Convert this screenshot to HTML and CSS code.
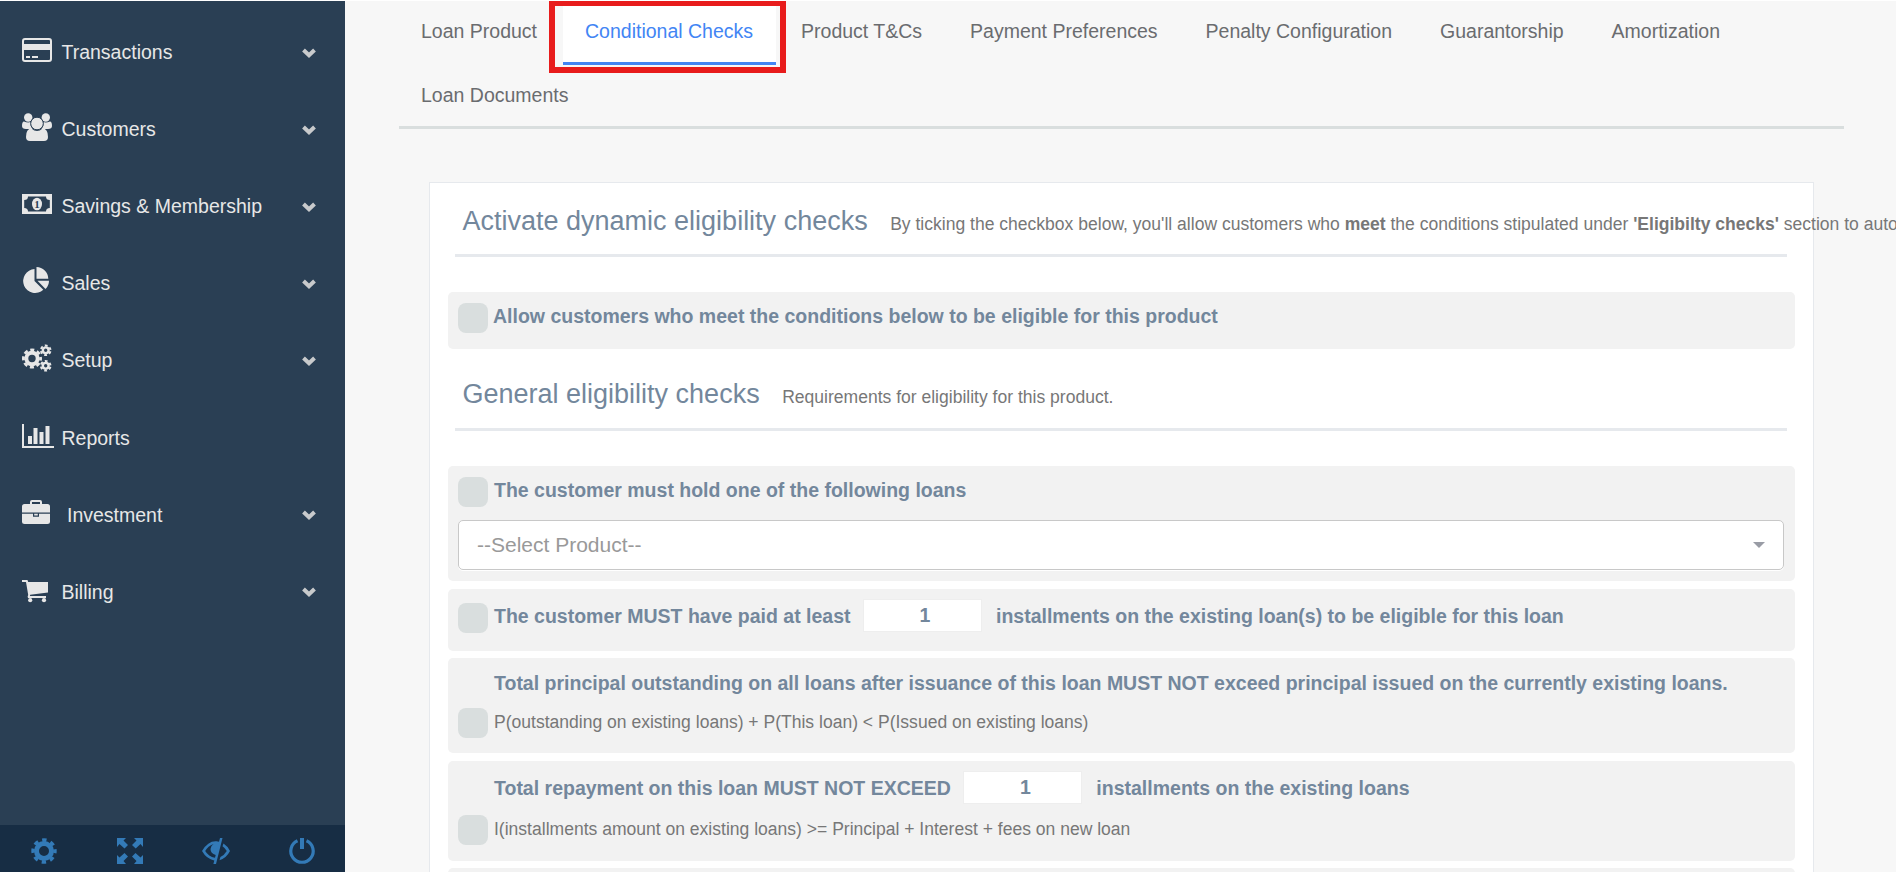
FILE: index.html
```html
<!DOCTYPE html>
<html lang="en">
<head>
  <meta charset="UTF-8">
  <title>Conditional Checks</title>
  <link rel="stylesheet" href="styles.css">
</head>
<body>

  <div class="wrapper">

    <div class="sidebar">
      <ul class="menu">
        <li>
          <svg class="icon" viewBox="0 0 34 30"><rect x="1" y="4" width="28" height="22" rx="2" fill="none" stroke="currentColor" stroke-width="2"/><path d="M1 9h28v6H1zM4 21h4v2H4zM10 21h6v2h-6z"/></svg>
          <span>Transactions</span>
          <svg class="arrow" viewBox="0 0 14 10"><path d="M1.5 2l5.500 5.200L12.500 2"/></svg>
        </li>
        <li>
          <svg class="icon" viewBox="0 0 34 30"><circle cx="6.200" cy="5.500" r="4.200"/><circle cx="23.800" cy="5.500" r="4.200"/><path d="M2 9.500Q6 11 8.500 10Q8 14 10.500 17H4Q0 17 0 14Q0 9.500 2 9.500zM28 9.500Q24 11 21.500 10Q22 14 19.500 17H26Q30 17 30 14Q30 9.500 28 9.500z"/><circle class="head" cx="15" cy="11.500" r="6.300"/><path d="M9.500 16.500Q15 21.500 20.500 16.500Q26 16.500 26 25Q26 29 22 29H8Q4 29 4 25Q4 16.500 9.500 16.500z"/></svg>
          <span>Customers</span>
          <svg class="arrow" viewBox="0 0 14 10"><path d="M1.5 2l5.500 5.200L12.500 2"/></svg>
        </li>
        <li>
          <svg class="icon" viewBox="0 0 34 30"><path fill-rule="evenodd" d="M0 5h30v20H0zM6 7.500Q6 11 2.200 11v8Q6 19 6 22.500H24Q24 19 27.800 19v-8Q24 11 24 7.500z"/><ellipse cx="15" cy="15" rx="5" ry="6.300"/><text class="note" x="15" y="19" text-anchor="middle">1</text></svg>
          <span>Savings &amp; Membership</span>
          <svg class="arrow" viewBox="0 0 14 10"><path d="M1.5 2l5.500 5.200L12.500 2"/></svg>
        </li>
        <li>
          <svg class="icon" viewBox="0 0 34 30"><path d="M12.500 3v12l8.800 8.800A12 12 0 1 1 12.500 3zM14.500 1A12 12 0 0 1 26.300 12.700H14.500zM15.500 14.800H27Q27 19.500 23.500 23z"/></svg>
          <span>Sales</span>
          <svg class="arrow" viewBox="0 0 14 10"><path d="M1.5 2l5.500 5.200L12.500 2"/></svg>
        </li>
        <li>
          <svg class="icon" viewBox="0 0 34 30"><g fill="none" stroke="currentColor"><circle cx="10" cy="15.500" r="5.700" stroke-width="4"/><circle cx="10" cy="15.500" r="8.600" stroke-width="2.800" stroke-dasharray="4 2.754" stroke-dashoffset="2"/><circle cx="23.700" cy="7.300" r="2.900" stroke-width="2.400"/><circle cx="23.700" cy="7.300" r="4.800" stroke-width="2" stroke-dasharray="2.800 2.227" stroke-dashoffset="4"/><circle cx="23.700" cy="22.800" r="2.900" stroke-width="2.400"/><circle cx="23.700" cy="22.800" r="4.800" stroke-width="2" stroke-dasharray="2.800 2.227" stroke-dashoffset="4"/></g></svg>
          <span>Setup</span>
          <svg class="arrow" viewBox="0 0 14 10"><path d="M1.5 2l5.500 5.200L12.500 2"/></svg>
        </li>
        <li>
          <svg class="icon" viewBox="0 0 34 30"><path d="M0 3h2v22h30v2H0zM6 15h4v8H6zM11.500 7h4v16h-4zM17.500 11h4v12h-4zM23.500 5h4v18h-4z"/></svg>
          <span>Reports</span>
        </li>
        <li>
          <svg class="icon" viewBox="0 0 34 30"><path fill-rule="evenodd" d="M8 6V4Q8 2 10 2h8Q20 2 20 4v2h5.500Q28 6 28 8.500V14.500H0V8.500Q0 6 2.500 6zM10 6h8V4h-8zM0 15.700h11v3h6v-3h11V24Q28 26 25.500 26h-23Q0 26 0 24zM12.200 15.700h3.600v1.800h-3.600z"/></svg>
          <span class="indent">Investment</span>
          <svg class="arrow" viewBox="0 0 14 10"><path d="M1.5 2l5.500 5.200L12.500 2"/></svg>
        </li>
        <li>
          <svg class="icon" viewBox="0 0 34 30"><path d="M0 5h5.500l.7 2H26v10.500L8.200 19.700l-.3 1.300H24v2H6q-.8-1.500.2-3L4 7H0z"/><circle cx="8.200" cy="25.200" r="2.100"/><circle cx="22" cy="25.200" r="2.100"/></svg>
          <span>Billing</span>
          <svg class="arrow" viewBox="0 0 14 10"><path d="M1.5 2l5.500 5.200L12.500 2"/></svg>
        </li>
      </ul>

      <div class="sidebar-footer">
        <a><svg viewBox="0 0 28 28"><g fill="none" stroke="currentColor"><circle cx="14" cy="14" r="7.500" stroke-width="5"/><circle cx="14" cy="14" r="11" stroke-width="3.400" stroke-dasharray="4.400 4.239" stroke-dashoffset="2.200"/></g></svg></a>
        <a><svg viewBox="0 0 28 28"><path d="M1 1h9L7.500 3.500 12 8l-3.500 3.500L3.500 7 1 10zM27 1v9l-2.500-3-4.800 4.500L16 8l4.500-4.500L18 1zM1 27v-9l2.500 2.500 5-4.500L12 19.500 7.500 24l2.500 3zM27 27h-9l2.500-3-4.500-4.500 3.500-3.500 5 4.500L27 18z"/></svg></a>
        <a><svg viewBox="0 0 28 28"><path fill-rule="evenodd" d="M18 1h2.500L14 27h-2.600l.9-3.500Q4.500 22 0 14 6 4 14 4.300q1.500-.1 3 .4zM11.500 7Q6 9 3.200 14q3.300 5.500 9.800 6.800l.7-2.700Q8.500 16.500 8.500 12q0-3 3-5z"/><path d="M11.500 11q-1.500 4 2.600 5.500l1-4.500zM21.500 6.500Q25.500 9 28 14q-3.500 7-10.500 9.300l.9-3.300q4-2 6.400-6-1.700-3-4.300-4.800z"/></svg></a>
        <a><svg viewBox="0 0 28 28"><path d="M9.500 3.800A11.200 11.200 0 1 0 18.500 3.800" fill="none" stroke="currentColor" stroke-width="3.200"/><path d="M12 1h4v11h-4z"/></svg></a>
      </div>
    </div>

    <div class="content">
      <ul class="tabs">
        <li>Loan Product</li>
        <li class="active">Conditional Checks</li>
        <li>Product T&amp;Cs</li>
        <li>Payment Preferences</li>
        <li>Penalty Configuration</li>
        <li>Guarantorship</li>
        <li>Amortization</li>
        <li>Loan Documents</li>
      </ul>

      <div class="panel">
        <div class="title">
          <h2>Activate dynamic eligibility checks <small>By ticking the checkbox below, you'll allow customers who <b>meet</b> the conditions stipulated under <b>'Eligibilty checks'</b> section to automatically</small></h2>
        </div>

        <div class="box box-allow">
          <div class="line">
            <span class="check"></span>
            <label class="allow">Allow customers who meet the conditions below to be eligible for this product</label>
          </div>
        </div>

        <div class="title second">
          <h2>General eligibility checks <small>Requirements for eligibility for this product.</small></h2>
        </div>

        <div class="box box-loans">
          <div class="line">
            <span class="check"></span>
            <label>The customer must hold one of the following loans</label>
          </div>
          <div class="select">--Select Product--</div>
        </div>

        <div class="box box-paid">
          <div class="line">
            <span class="check"></span>
            <label>The customer MUST have paid at least</label>
            <input type="text" value="1">
            <label>installments on the existing loan(s) to be eligible for this loan</label>
          </div>
        </div>

        <div class="box box-principal">
          <div class="line no-check">
            <label>Total principal outstanding on all loans after issuance of this loan MUST NOT exceed principal issued on the currently existing loans.</label>
          </div>
          <div class="line formula">
            <span class="check"></span>
            <p>P(outstanding on existing loans) + P(This loan) &lt; P(Issued on existing loans)</p>
          </div>
        </div>

        <div class="box box-repayment">
          <div class="line no-check">
            <label>Total repayment on this loan MUST NOT EXCEED</label>
            <input type="text" value="1">
            <label>installments on the existing loans</label>
          </div>
          <div class="line formula">
            <span class="check"></span>
            <p>I(installments amount on existing loans) &gt;= Principal + Interest + fees on new loan</p>
          </div>
        </div>

        <div class="box box-next"></div>
      </div>
    </div>

  </div>

</body>
</html>
```
FILE: styles.css
```css
* {
  box-sizing: border-box;
}

body {
  margin: 0;
  padding-top: 1px;
  height: 872px;
  overflow: hidden;
  background: #fff;
  color: #73879c;
  font-family: "Liberation Sans", Arial, sans-serif;
  font-size: 19.5px;
}

ul, h2, p {
  margin: 0;
  padding: 0;
  list-style: none;
}

svg {
  fill: currentColor;
}

.wrapper {
  display: flex;
  height: 871px;
  overflow: hidden;
}

/* sidebar */
.sidebar {
  display: flex;
  flex-direction: column;
  justify-content: space-between;
  flex: 0 0 345px;
  background: #2a3f54;
  color: #e7e7e7;
}

.menu {
  padding-top: 13px;
}

.menu li {
  display: flex;
  align-items: center;
  height: 77.1px;
  padding: 0 29px 0 22px;
}

.menu .icon {
  width: 34px;
  height: 30px;
  margin: -5px 5.5px 0 0;
}

.menu .indent {
  padding-left: 5.5px;
}

.menu .arrow {
  width: 14px;
  height: 10px;
  margin-left: auto;
  fill: none;
  stroke: #c8cacc;
  stroke-width: 4;
}

.head {
  stroke: #2a3f54;
  stroke-width: 1;
}

.note {
  font: bold 11px "Liberation Serif", serif;
  fill: #2a3f54;
}

.sidebar-footer {
  display: flex;
  height: 47px;
  background: #172d44;
  color: #337ab7;
}

.sidebar-footer a {
  flex: 1;
  padding: 12px 0 0 1px;
  text-align: center;
}

.sidebar-footer svg {
  width: 28px;
  height: 28px;
}

/* tabs */
.content {
  flex: 1;
  min-width: 0;
  padding: 0 52px 0 54px;
  background: #f7f7f7;
}

.tabs {
  display: flex;
  flex-wrap: wrap;
  height: 128px;
  border-bottom: 3px solid #d9dede;
}

.tabs li {
  position: relative;
  height: 64px;
  margin-right: 3px;
  padding: 0 22.5px 0 22px;
  line-height: 60px;
  color: #6a6c6f;
}

.tabs li + li {
  margin-left: .5px;
}

.tabs .active {
  background: #fff;
  border-bottom: 3px solid #4285f4;
  color: #4285f4;
}

.tabs .active::after {
  content: "";
  position: absolute;
  top: -1px;
  right: -10px;
  bottom: -11px;
  left: -14px;
  border: 6px solid #e81c1c;
}

.tabs li:last-child {
  margin-left: 0;
}

/* form panel */
.panel {
  height: 800px;
  margin: 53px 30px 0;
  padding: 0 18px;
  background: #fff;
  border: 1px solid #e6e9ed;
}

.title {
  height: 74px;
  margin: 0 8px 35px 7px;
  padding: 20px 0 0 7.5px;
  border-bottom: 3px solid #e6e9ed;
}

.title.second {
  height: 82px;
  padding-top: 27px;
}

.title h2 {
  font-size: 27px;
  font-weight: 400;
  line-height: 36px;
  white-space: nowrap;
}

.title small {
  margin-left: 15px;
  font-size: 17.55px;
  color: #777;
}

.box {
  margin-bottom: 7.5px;
  padding: 11px 10px 0;
  background: #f2f2f2;
  border-radius: 5px;
}

.line {
  display: flex;
  align-items: flex-start;
}

.line label {
  margin-left: 6px;
  font-weight: bold;
  line-height: 27px;
  white-space: nowrap;
}

.line .allow {
  margin-left: 5px;
}

.line p {
  margin-left: 6px;
  font-size: 17.55px;
  line-height: 28px;
  color: #777;
}

.line input {
  width: 119px;
  height: 33px;
  margin: -4px 8px 0 12.5px;
  padding: 0 0 0 5px;
  border: 1px solid #eee;
  background: #fff;
  color: #73879c;
  font: bold 19.5px "Liberation Sans", Arial, sans-serif;
  text-align: center;
}

.no-check {
  padding-left: 30px;
}

.check {
  width: 30px;
  height: 30px;
  background: #d9dede;
  border-radius: 8px;
}

.select {
  display: flex;
  align-items: center;
  justify-content: space-between;
  height: 50px;
  margin: 13px 1px 0 0;
  padding: 0 18px;
  background: #fff;
  border: 1px solid #c8c8c8;
  border-radius: 5px;
  box-shadow: 0 1px 0 #fff;
  font-size: 21px;
  color: #999;
}

.select::after {
  content: "";
  border: 6px solid transparent;
  border-top-color: #999ca5;
  border-bottom: 0;
}

.box-allow {
  height: 57px;
  margin-bottom: 0;
}

.box-loans {
  height: 115px;
}

.box-paid {
  height: 62px;
  padding-top: 14px;
}

.box-principal {
  height: 95px;
  padding-top: 12px;
}

.box-principal .formula {
  margin-top: 11px;
}

.box-repayment {
  height: 100px;
  padding-top: 14px;
}

.box-repayment .line {
  height: 27px;
}

.box-repayment .formula {
  margin-top: 13px;
}

.box-next {
  height: 80px;
}
```
